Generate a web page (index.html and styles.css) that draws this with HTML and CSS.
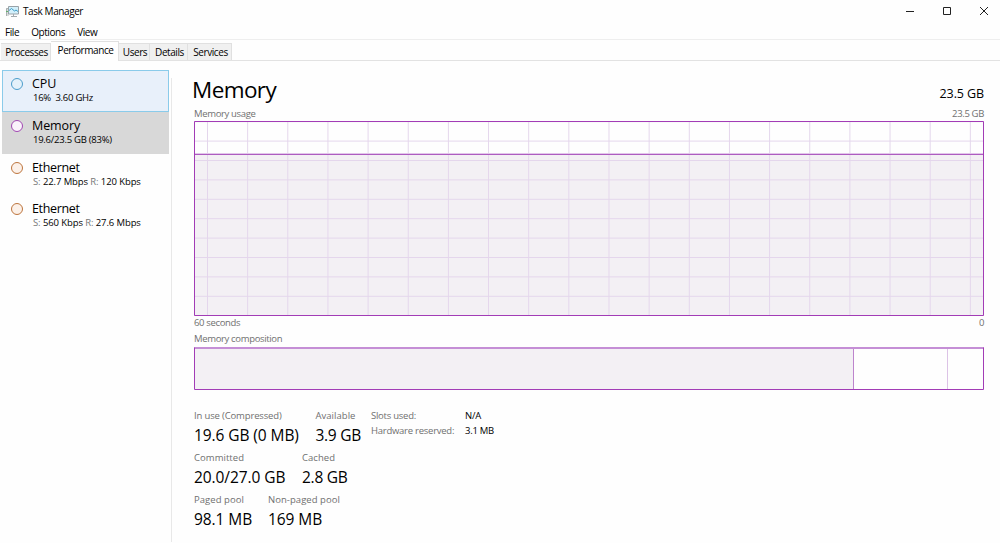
FILE: index.html
```html
<!DOCTYPE html>
<html lang="en">
<head>
<meta charset="utf-8">
<title>Task Manager</title>
<link rel="stylesheet" href="styles.css">
</head>
<body>
<div class="window">
  <header class="titlebar">
    <svg class="app-icon" width="15" height="13" viewBox="0 0 15 13">
      <path d="M1 3h3v8h-3z" fill="#d9dcdc"/>
      <path d="M1.500 11v-7.500h2" fill="none" stroke="#a9b0b0"/>
      <path d="M1 6.500h2" stroke="#62b06c"/>
      <path d="M3.500 1.500h10v7.500h-10z" fill="#d3f0fb" stroke="#98a2a8"/>
      <path d="M4 5.500l2.500-2 3 2.500 1.500-1 2 1.500" fill="none" stroke="#3b9cc8"/>
      <path d="M6 11.500h6M8.500 9v2" stroke="#a3abaf"/>
    </svg>
    <h1 class="app-name">Task Manager</h1>
    <div class="controls">
      <svg width="10" height="10" viewBox="0 0 10 10"><path d="M1 5.500h8" stroke="#222"/></svg>
      <svg width="10" height="10" viewBox="0 0 10 10"><path d="M1.500 1.500h7v7h-7z" fill="none" stroke="#222"/></svg>
      <svg width="10" height="10" viewBox="0 0 10 10"><path d="M1 1l8 8M9 1l-8 8" stroke="#222"/></svg>
    </div>
  </header>
  <nav class="menu"><span>File</span><span>Options</span><span>View</span></nav>
  <div class="tabs">
    <div class="tab tab-processes">Processes</div>
    <div class="tab tab-performance active">Performance</div>
    <div class="tab tab-users">Users</div>
    <div class="tab tab-details">Details</div>
    <div class="tab tab-services">Services</div>
  </div>
  <main class="content">
    <aside class="sidebar">
      <div class="item item-cpu">
        <i class="dot dot-blue"></i>
        <div><div class="name">CPU</div><div class="detail">16%&nbsp; 3.60 GHz</div></div>
      </div>
      <div class="item item-memory">
        <i class="dot dot-purple"></i>
        <div><div class="name">Memory</div><div class="detail">19.6/23.5 GB (83%)</div></div>
      </div>
      <div class="item">
        <i class="dot dot-orange"></i>
        <div><div class="name name-net">Ethernet</div><div class="detail detail-net"><b>S:</b> 22.7 Mbps <b>R:</b> 120 Kbps</div></div>
      </div>
      <div class="item">
        <i class="dot dot-orange"></i>
        <div><div class="name name-net">Ethernet</div><div class="detail detail-net"><b>S:</b> 560 Kbps <b>R:</b> 27.6 Mbps</div></div>
      </div>
    </aside>
    <section class="panel">
      <div class="heading"><h2>Memory</h2><span class="total">23.5 GB</span></div>
      <div class="caption caption-usage"><span>Memory usage</span><span>23.5 GB</span></div>
      <svg class="chart" width="790" height="195" viewBox="0 0 790 195">
        <defs>
          <pattern id="cols" x="13" width="40.150" height="195" patternUnits="userSpaceOnUse"><path d="M.5 0v195" stroke="#e4d6ec"/></pattern>
          <pattern id="rows" y="19.600" width="790" height="19.400" patternUnits="userSpaceOnUse"><path d="M0 .5h790" stroke="#e4d6ec"/></pattern>
        </defs>
        <path d="M1 33h788v161h-788z" fill="#f3f0f4"/>
        <path d="M0 0h790v195h-790z" fill="url(#cols)"/>
        <path d="M0 0h790v195h-790z" fill="url(#rows)"/>
        <path d="M.5 .5h789v194h-789z" fill="none" stroke="#a23cb6"/>
        <path d="M1 32h788v1h-788z" fill="#e2c6ea"/>
        <path d="M1 33h788v1h-788z" fill="#ad5cc0"/>
      </svg>
      <div class="caption caption-time"><span>60 seconds</span><span>0</span></div>
      <div class="caption caption-composition"><span>Memory composition</span></div>
      <svg class="composition" width="790" height="43" viewBox="0 0 790 43">
        <path d="M1 1h658v41h-658z" fill="#f3f0f4"/>
        <path d="M659 1h1v41h-1z" fill="#bd84cd"/>
        <path d="M753 1h1v41h-1z" fill="#dcc3e6"/>
        <path d="M.5 .5h789v42h-789z" fill="none" stroke="#a23cb6"/>
        <path d="M1 0h788v2h-788z" fill="#c58fd6"/>
      </svg>
      <div class="stats">
        <div class="figures">
          <div class="row">
            <div class="stat stat-inuse"><label>In use (Compressed)</label><strong>19.6 GB (0 MB)</strong></div>
            <div class="stat stat-available"><label>Available</label><strong>3.9 GB</strong></div>
          </div>
          <div class="row">
            <div class="stat stat-committed"><label>Committed</label><strong>20.0/27.0 GB</strong></div>
            <div class="stat stat-cached"><label>Cached</label><strong>2.8 GB</strong></div>
          </div>
          <div class="row">
            <div class="stat stat-paged"><label>Paged pool</label><strong>98.1 MB</strong></div>
            <div class="stat stat-nonpaged"><label>Non-paged pool</label><strong>169 MB</strong></div>
          </div>
        </div>
        <dl class="hardware">
          <dt>Slots used:</dt><dd>N/A</dd>
          <dt>Hardware reserved:</dt><dd>3.1 MB</dd>
        </dl>
      </div>
    </section>
  </main>
</div>
</body>
</html>
```

FILE: styles.css
```css
* { box-sizing: border-box; }
body { margin: 0; background: #fefefe; color: #000; font: 10px/14px "Open Sans", "Noto Sans", sans-serif; }
h1, h2, dl, dd { margin: 0; font-weight: 400; }
.window { width: 1000px; height: 543px; overflow: hidden; display: flex; flex-direction: column; white-space: nowrap; }
.titlebar { height: 23px; display: flex; align-items: center; padding: 0 11px 1px 5px; gap: 3px; }
.app-icon { flex: none; }
.app-name { font-size: 10px; line-height: 14px; letter-spacing: -.42px; }
.controls { margin-left: auto; display: flex; gap: 27px; }
.menu { height: 17px; display: flex; gap: 12px; padding: 2px 0 0 5px; border-bottom: 1px solid #eee; letter-spacing: -.42px; }
.tabs { height: 21px; display: flex; align-items: flex-end; padding-left: 1px; border-bottom: 1px solid #e2e2e2; letter-spacing: -.42px; }
.tab { height: 17px; padding-left: 2px; background: #f0f0f0; border: 1px solid #e0e0e0; border-width: 1px 1px 0 0; text-align: center; line-height: 17px; }
.tab-processes { width: 50px; }
.tab-performance { width: 68px; }
.tab-users { width: 31px; }
.tab-details { width: 38px; }
.tab-services { width: 44px; }
.active { height: 20px; background: #fefefe; margin-bottom: -1px; }
.content { flex: 1; display: flex; min-height: 0; }
.sidebar { width: 173px; padding: 9px 4px 0 2px; background: linear-gradient(#e8e8e8, #e8e8e8) 171px 17px / 1px 464px no-repeat; }
.item { height: 41.750px; display: flex; gap: 9px; padding: 6px 0 0 9px; }
.item-cpu { background: #e8f0fa; border: 1px solid #8acbea; padding: 5px 0 0 8px; }
.item-memory { background: #d8d8d8; }
.dot { width: 12px; height: 12px; margin-top: 2px; border-radius: 50%; border: 1px solid; }
.dot-blue { border-color: #4c9dcb; background: #e4f1fa; }
.dot-purple { border-color: #a047b1; background: #faf3fb; }
.dot-orange { border-color: #bd753e; background: #fcf1e9; }
.name { font-size: 12.500px; line-height: 16px; letter-spacing: -.1px; }
.name-net { letter-spacing: -.35px; }
.detail { font-size: 9.500px; line-height: 12px; padding-left: 1px; letter-spacing: -.25px; }
.detail-net { letter-spacing: -.1px; }
.detail b { font-weight: 400; color: #777; }
.panel { width: 811px; padding-left: 21px; }
.heading { height: 46px; display: flex; justify-content: space-between; align-items: flex-end; }
h2 { font-size: 22.500px; line-height: 32px; margin-left: -2px; padding-bottom: 1px; letter-spacing: -.6px; }
.total { font-size: 12.500px; line-height: 16px; padding-bottom: 5px; letter-spacing: -.1px; }
.caption { display: flex; justify-content: space-between; font-size: 9.500px; line-height: 12px; color: #707070; letter-spacing: -.34px; }
.caption-usage { height: 14px; padding-top: 1px; }
.chart, .composition { display: block; }
.caption-time { height: 16px; padding-top: 1px; }
.caption-composition { height: 15px; padding-top: 1px; }
.stats { display: flex; padding-top: 20px; gap: 10px; }
.figures { width: 167px; }
.row { display: flex; height: 41.800px; }
.stat { display: flex; flex-direction: column; }
.stat label { font-size: 9.500px; line-height: 12px; color: #707070; letter-spacing: .05px; }
.stat-inuse label { letter-spacing: -.15px; }
.stat strong { font-weight: 400; font-size: 15.500px; line-height: 26px; letter-spacing: -.08px; }
.stat-available strong, .stat-cached strong { letter-spacing: -.25px; }
.stat-inuse { width: 122px; }
.stat-available label { padding-left: 0; }
.stat-available { margin-left: 0; }
.stat-inuse + .stat-available { flex: none; }
.stat-committed { width: 108px; }
.stat-paged { width: 74px; }
.hardware { display: grid; grid-template-columns: 94px 40px; grid-auto-rows: 15px; font-size: 9.500px; line-height: 12px; letter-spacing: -.25px; }
.hardware dt { color: #707070; }
```
